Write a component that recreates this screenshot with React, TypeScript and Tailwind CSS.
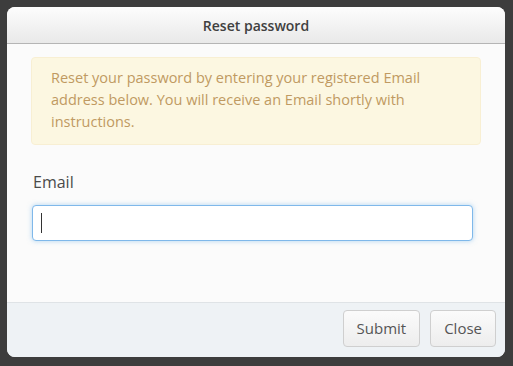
export default function App() {
  return (
    <div className="h-[366px] w-[513px] bg-[#3d3d3d] pt-[7px] pl-[7px] font-['Open_Sans',sans-serif]">
      <div className="flex h-[350px] w-[498px] flex-col overflow-hidden rounded-[8px] bg-[#fbfbfb]">
        <div className="flex h-[37px] shrink-0 items-center justify-center border-b border-[#b5b5b5] bg-gradient-to-b from-[#fdfdfd] to-[#e9e9e9]">
          <h1 className="text-[14px] font-semibold text-[#404040]">Reset password</h1>
        </div>
        <div className="flex-1 px-[24px] pt-[13px]">
          <div className="rounded-[4px] border border-[#f8efd3] bg-[#fcf7e1] px-[19px] pt-[9px] pb-[11px] text-[14.5px] leading-[22px] text-[#c09a62]">
            Reset your password by entering your registered Email address below. You will receive an Email shortly with instructions.
          </div>
          <label className="mt-[25px] block pl-[2px] text-[16px] text-[#4a4a4a]">Email</label>
          <div className="mt-[11px] mr-[8px] ml-[1px] flex h-[36px] items-center rounded-[4px] border border-[#7fb8ea] bg-white pl-[8px] shadow-[0_0_5px_rgba(102,175,233,0.5)]">
            <span className="h-[20px] w-px bg-[#333]" />
          </div>
        </div>
        <div className="flex h-[55px] shrink-0 items-start justify-end gap-[10px] border-t border-[#dfe3e6] bg-[#eef2f5] pt-[7px] pr-[9px]">
          <button className="h-[37px] rounded-[4px] border border-[#cfcfcf] bg-gradient-to-b from-[#fbfbfb] to-[#ededed] px-[13px] text-[15px] text-[#555]">
            Submit
          </button>
          <button className="h-[37px] rounded-[4px] border border-[#cfcfcf] bg-gradient-to-b from-[#fbfbfb] to-[#ededed] px-[13px] text-[15px] text-[#555]">
            Close
          </button>
        </div>
      </div>
    </div>
  );
}
